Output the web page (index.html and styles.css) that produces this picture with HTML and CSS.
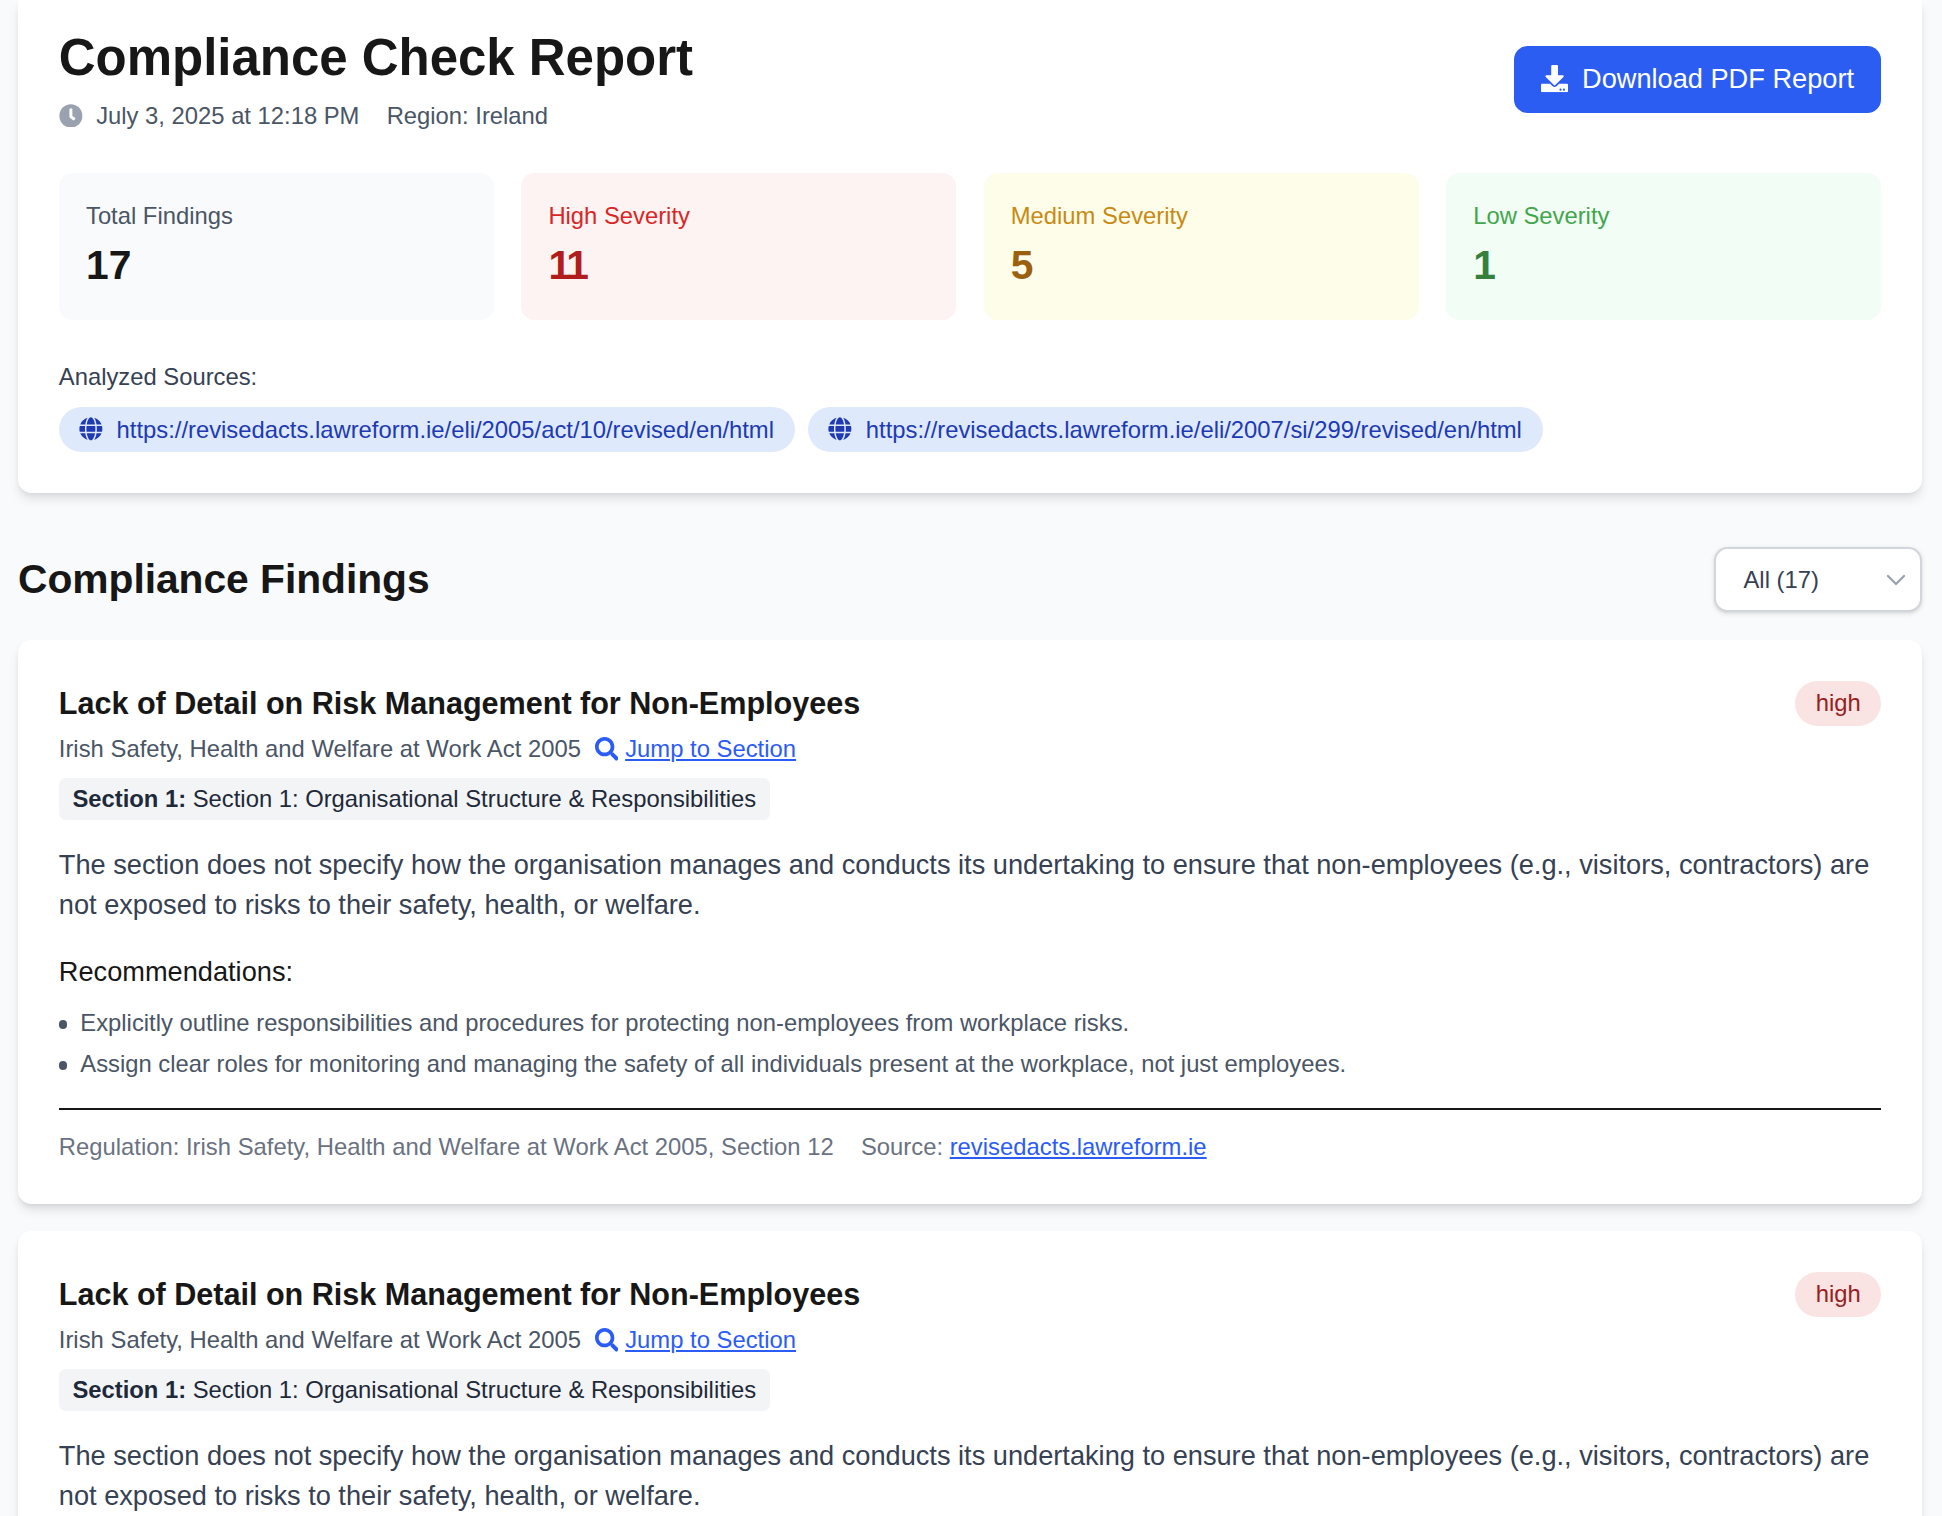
FILE: index.html
```html
<!DOCTYPE html>
<html lang="en">
<head>
  <meta charset="UTF-8" />
  <meta name="viewport" content="width=device-width, initial-scale=1" />
  <title>Compliance Check Report</title>
  <link rel="stylesheet" href="styles.css">
</head>
<body>
  <svg class="sprite" aria-hidden="true">
    <symbol id="icon-clock" viewBox="0 0 512 512"><path d="M256,8C119,8,8,119,8,256S119,504,256,504,504,393,504,256,393,8,256,8Zm92.49,313h0l-20,25a16,16,0,0,1-22.49,2.5h0l-67-49.72a40,40,0,0,1-15-31.23V112a16,16,0,0,1,16-16h32a16,16,0,0,1,16,16V256l58,42.5A16,16,0,0,1,348.49,321Z"/></symbol>
    <symbol id="icon-download" viewBox="0 0 512 512"><path d="M216 0h80c13.3 0 24 10.7 24 24v168h87.7c17.8 0 26.7 21.5 14.1 34.1L269.7 378.3c-7.5 7.5-19.8 7.5-27.3 0L90.1 226.1c-12.6-12.6-3.7-34.1 14.1-34.1H192V24c0-13.3 10.7-24 24-24zm296 376v112c0 13.3-10.7 24-24 24H24c-13.3 0-24-10.7-24-24V376c0-13.3 10.7-24 24-24h146.7l49 49c20.1 20.1 52.5 20.1 72.6 0l49-49H488c13.3 0 24 10.7 24 24zm-124 88c0-11-9-20-20-20s-20 9-20 20 9 20 20 20 20-9 20-20zm64 0c0-11-9-20-20-20s-20 9-20 20 9 20 20 20 20-9 20-20z"/></symbol>
    <symbol id="icon-globe" viewBox="0 0 496 512"><path d="M336.5 160C322 70.7 287.8 8 248 8s-74 62.7-88.5 152h177zM152 256c0 22.2 1.2 43.5 3.3 64h185.3c2.1-20.5 3.3-41.8 3.3-64s-1.2-43.5-3.3-64H155.3c-2.1 20.5-3.3 41.8-3.3 64zm324.7-96c-28.6-67.9-86.5-120.4-158-141.6 24.4 33.8 41.2 84.7 50 141.6h108zM177.2 18.4C105.8 39.6 47.8 92.1 19.3 160h108c8.7-56.9 25.5-107.8 49.9-141.6zM487.4 192H372.7c2.1 21 3.3 42.5 3.3 64s-1.2 43-3.3 64h114.6c5.5-20.5 8.6-41.8 8.6-64s-3.1-43.5-8.5-64zM120 256c0-21.5 1.2-43 3.3-64H8.6C3.2 212.5 0 233.8 0 256s3.2 43.5 8.6 64h114.6c-2-21-3.2-42.5-3.2-64zm39.5 96c14.5 89.3 48.7 152 88.5 152s74-62.7 88.5-152h-177zm159.3 141.6c71.4-21.2 129.4-73.7 158-141.6h-108c-8.8 56.9-25.6 107.8-50 141.6zM19.3 352c28.6 67.9 86.5 120.4 158 141.6-24.4-33.8-41.2-84.7-50-141.6h-108z"/></symbol>
    <symbol id="icon-search" viewBox="0 0 512 512"><path d="M505 442.7L405.3 343c-4.5-4.5-10.6-7-17-7H372c27.6-35.3 44-79.7 44-128C416 93.1 322.9 0 208 0S0 93.1 0 208s93.1 208 208 208c48.3 0 92.7-16.4 128-44v16.3c0 6.4 2.5 12.5 7 17l99.7 99.7c9.4 9.4 24.6 9.4 33.9 0l28.3-28.3c9.4-9.4 9.4-24.6.1-34zM208 336c-70.7 0-128-57.2-128-128 0-70.7 57.2-128 128-128 70.7 0 128 57.2 128 128 0 70.7-57.2 128-128 128z"/></symbol>
  </svg>

  <main>
    <section class="card report">
      <div class="report-header">
        <div>
          <h1>Compliance Check Report</h1>
          <div class="meta">
            <svg class="icon icon-muted"><use href="#icon-clock"/></svg>
            <span>July 3, 2025 at 12:18 PM</span>
            <span class="region">Region: Ireland</span>
          </div>
        </div>
        <button class="btn-download">
          <svg class="icon"><use href="#icon-download"/></svg>
          Download PDF Report
        </button>
      </div>

      <div class="stats">
        <div class="stat total">
          <div class="stat-label">Total Findings</div>
          <div class="stat-value">17</div>
        </div>
        <div class="stat high">
          <div class="stat-label">High Severity</div>
          <div class="stat-value">11</div>
        </div>
        <div class="stat medium">
          <div class="stat-label">Medium Severity</div>
          <div class="stat-value">5</div>
        </div>
        <div class="stat low">
          <div class="stat-label">Low Severity</div>
          <div class="stat-value">1</div>
        </div>
      </div>

      <div class="sources-title">Analyzed Sources:</div>
      <div class="sources">
        <span class="source"><svg class="icon"><use href="#icon-globe"/></svg>https://revisedacts.lawreform.ie/eli/2005/act/10/revised/en/html</span>
        <span class="source"><svg class="icon"><use href="#icon-globe"/></svg>https://revisedacts.lawreform.ie/eli/2007/si/299/revised/en/html</span>
      </div>
    </section>

    <div class="findings-header">
      <h2>Compliance Findings</h2>
      <div class="filter">
        <span>All (17)</span>
        <svg class="chevron" viewBox="0 0 20 12"><path d="M2 2l8 8 8-8"/></svg>
      </div>
    </div>

    <article class="card finding">
      <div class="finding-header">
        <h3>Lack of Detail on Risk Management for Non-Employees</h3>
        <span class="badge">high</span>
      </div>
      <div class="law">
        <span>Irish Safety, Health and Welfare at Work Act 2005</span>
        <svg class="icon"><use href="#icon-search"/></svg>
        <a href="#">Jump to Section</a>
      </div>
      <div class="section-tag"><strong>Section 1:</strong> Section 1: Organisational Structure &amp; Responsibilities</div>
      <p>The section does not specify how the organisation manages and conducts its undertaking to ensure that non-employees (e.g., visitors, contractors) are not exposed to risks to their safety, health, or welfare.</p>
      <h4>Recommendations:</h4>
      <ul>
        <li>Explicitly outline responsibilities and procedures for protecting non-employees from workplace risks.</li>
        <li>Assign clear roles for monitoring and managing the safety of all individuals present at the workplace, not just employees.</li>
      </ul>
      <div class="finding-footer">
        <span>Regulation: Irish Safety, Health and Welfare at Work Act 2005, Section 12</span>
        <span>Source: <a href="#">revisedacts.lawreform.ie</a></span>
      </div>
    </article>

    <article class="card finding">
      <div class="finding-header">
        <h3>Lack of Detail on Risk Management for Non-Employees</h3>
        <span class="badge">high</span>
      </div>
      <div class="law">
        <span>Irish Safety, Health and Welfare at Work Act 2005</span>
        <svg class="icon"><use href="#icon-search"/></svg>
        <a href="#">Jump to Section</a>
      </div>
      <div class="section-tag"><strong>Section 1:</strong> Section 1: Organisational Structure &amp; Responsibilities</div>
      <p>The section does not specify how the organisation manages and conducts its undertaking to ensure that non-employees (e.g., visitors, contractors) are not exposed to risks to their safety, health, or welfare.</p>
    </article>
  </main>
</body>
</html>
```

FILE: styles.css
```css
* {
  box-sizing: border-box;
}
html {
  font-size: 27.2px;
}
body {
  margin: 0;
  height: 1516px;
  overflow: hidden;
  background: #f9fafc;
  color: #171717;
  font-family: Arial, "Liberation Sans", Helvetica, sans-serif;
  font-size: 1rem;
  line-height: 40px;
}
h1, h2, h3, h4, p, ul {
  margin: 0;
}
main {
  padding: 0 20px 0 18px;
}
a {
  color: #2b5cf6;
  text-underline-offset: 2px;
  text-decoration-thickness: 2px;
}
.sprite {
  display: none;
}
.icon {
  width: 0.875rem;
  height: 0.875rem;
  flex: none;
  fill: currentColor;
}
.icon-muted {
  color: #9aa1af;
}
.card {
  background: #fff;
  border-radius: 0.5rem;
  padding: 1.5rem;
  box-shadow: 0 0.25rem 0.375rem -0.0625rem rgba(0, 0, 0, 0.1), 0 0.125rem 0.25rem -0.125rem rgba(0, 0, 0, 0.1);
}

/* report summary */
.report {
  padding-top: 28px;
  padding-bottom: 41.3px;
  border-top-left-radius: 0;
  border-top-right-radius: 0;
}
.report-header {
  display: flex;
  justify-content: space-between;
  align-items: center;
  margin-bottom: 42px;
}
h1 {
  font-size: 1.875rem;
  line-height: 60px;
  letter-spacing: -0.03px;
  margin-bottom: 12px;
}
.meta {
  display: flex;
  align-items: center;
  font-size: 0.875rem;
  line-height: 31px;
  color: #4a5565;
}
.meta .icon {
  margin-right: 0.5rem;
}
.region {
  margin-left: 1rem;
}
.btn-download {
  display: flex;
  align-items: center;
  gap: 0.5rem;
  padding: 13px 1rem 14.2px;
  border: none;
  border-radius: 0.5rem;
  background: #2c5df3;
  color: #fff;
  font: inherit;
}
.btn-download .icon {
  width: 1rem;
  height: 1rem;
}
.stats {
  display: grid;
  grid-template-columns: repeat(4, 1fr);
  gap: 1rem;
  margin-bottom: 41.3px;
}
.stat {
  padding: 27.2px 27.2px 27.7px;
  border-radius: 0.5rem;
}
.stat-label {
  font-size: 0.875rem;
  line-height: 31px;
  margin-bottom: 0.25rem;
}
.stat-value {
  font-size: 1.5rem;
  font-weight: bold;
  line-height: 54.4px;
}
.total {
  background: #f9fafc;
}
.total .stat-label {
  color: #4a5565;
}
.high {
  background: #fdf3f2;
  color: #b11c1c;
}
.high .stat-label {
  color: #d82626;
}
.high .stat-value {
  letter-spacing: -0.06em;
}
.medium {
  background: #fefdea;
  color: #9a6010;
}
.medium .stat-label {
  color: #c88a12;
}
.low {
  background: #f2fdf5;
  color: #36803e;
}
.low .stat-label {
  color: #42a64c;
}
.sources-title {
  font-size: 0.875rem;
  line-height: 31px;
  color: #364153;
  margin-bottom: 14.8px;
}
.sources {
  display: flex;
  gap: 13px;
}
.source {
  display: flex;
  align-items: center;
  gap: 0.5rem;
  padding: 6.4px 21.1px 7.2px 0.75rem;
  border-radius: 999px;
  background: #dee9fc;
  color: #203ab4;
  font-size: 0.875rem;
  line-height: 31.2px;
}

/* findings */
.findings-header {
  display: flex;
  justify-content: space-between;
  align-items: center;
  margin: 54px 0 28.2px;
}
h2 {
  font-size: 1.5rem;
  line-height: 54px;
  letter-spacing: -0.05px;
  padding-bottom: 1px;
}
.filter {
  display: flex;
  justify-content: space-between;
  align-items: center;
  width: 208px;
  height: 65px;
  padding: 0 14px 0 27.5px;
  border: 2px solid #d1d5dc;
  border-radius: 0.5rem;
  background: #fff;
  color: #364153;
  font-size: 0.875rem;
  box-shadow: 0 0.0625rem 0.1875rem rgba(0, 0, 0, 0.1), 0 0.0625rem 0.125rem -0.0625rem rgba(0, 0, 0, 0.1);
}
.chevron {
  width: 20px;
  height: 12px;
  fill: none;
  stroke: #99a1af;
  stroke-width: 2.2;
  stroke-linecap: round;
  stroke-linejoin: round;
}
.finding {
  padding-top: 40.2px;
  padding-bottom: 42.4px;
  margin-bottom: 1rem;
}
.finding-header {
  display: flex;
  justify-content: space-between;
  align-items: flex-start;
  margin-bottom: 6px;
}
h3 {
  font-size: 1.125rem;
  line-height: 1.5;
  letter-spacing: -0.02px;
  padding-top: 0.6px;
}
.badge {
  padding: 0.25rem 0.75rem;
  border-radius: 999px;
  background: #fae3e3;
  color: #97201d;
  font-size: 0.875rem;
  line-height: 31.4px;
}
.law {
  display: flex;
  align-items: center;
  font-size: 0.875rem;
  line-height: 31px;
  letter-spacing: 0.02px;
  color: #4a5565;
}
.law .icon {
  margin: 0 0.25rem 0 0.5rem;
  color: #2b5cf6;
}
.section-tag {
  width: fit-content;
  margin: 0.5rem 0 25.2px;
  padding: 5.5px 0.5rem;
  border-radius: 0.25rem;
  background: #f3f4f6;
  color: #1e2939;
  font-size: 0.875rem;
  line-height: 31px;
}
.finding p {
  color: #364153;
}
h4 {
  margin-top: 1rem;
  font-size: 1rem;
  font-weight: normal;
}
ul {
  margin-top: 14px;
  padding: 0;
  list-style: none;
  font-size: 0.875rem;
  line-height: 34px;
  color: #4a5565;
}
li {
  display: flex;
  align-items: center;
  margin-bottom: 0.25rem;
}
li:last-child {
  margin-bottom: 0;
}
li::before {
  content: "";
  width: 8.5px;
  height: 8.5px;
  margin: 3px 13px 0 0;
  border-radius: 50%;
  background: currentColor;
}
.finding-footer {
  display: flex;
  gap: 1rem;
  margin-top: 27.6px;
  padding-top: 0.75rem;
  border-top: 2px solid #171717;
  font-size: 0.875rem;
  line-height: 31px;
  letter-spacing: 0.015px;
  color: #6a7282;
}
```
